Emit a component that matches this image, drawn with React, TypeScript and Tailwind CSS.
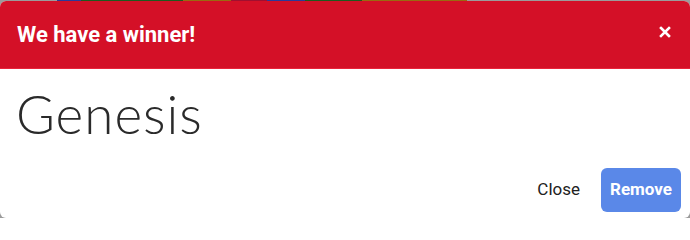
const WinnerModal = () => {
  return (
    <div className="flex flex-col w-[690px] h-[217px] bg-white rounded-[6px] overflow-hidden">
      {/* Header */}
      <div className="flex items-center justify-between h-[68px] pl-[17px] pr-[19px] bg-[#d41027] border-b border-[#e8243a]">
        <h2 className="text-[22px] font-bold text-white font-['Roboto',sans-serif] pb-[1px]">
          We have a winner!
        </h2>
        <button type="button" className="text-white pb-[5px]">
          <svg width="12" height="12" viewBox="0 0 12 12">
            <path d="M2 2 L10 10 M10 2 L2 10" stroke="white" strokeWidth="2.6" strokeLinecap="square" />
          </svg>
        </button>
      </div>

      {/* Body */}
      <div className="px-[16px] pt-[13px] flex-1">
        <p className="text-[53px] leading-[64px] tracking-[1px] font-light text-[#2a2a2a] font-['Lato',sans-serif]">
          Genesis
        </p>
      </div>

      {/* Footer */}
      <div className="flex items-center justify-end gap-[21px] pr-[9px] pb-[6px] font-['Roboto',sans-serif]">
        <button type="button" className="text-[17px] text-[#212121] font-normal">
          Close
        </button>
        <button
          type="button"
          className="w-[80px] h-[44px] rounded-[6px] bg-[#5a88e8] text-white text-[17px] font-bold"
        >
          Remove
        </button>
      </div>
    </div>
  );
};

const App = () => {
  return (
    <div className="w-[690px] h-[218px] bg-[#9b9b9b] overflow-hidden">
      <div className="flex h-[1px]">
        <div className="w-[57px] bg-[#9b9b9b]" />
        <div className="w-[24px] bg-[#2a3a9a]" />
        <div className="w-[102px] bg-[#1e5a1e]" />
        <div className="w-[48px] bg-[#9a6a10]" />
        <div className="w-[36px] bg-[#a01030]" />
        <div className="w-[38px] bg-[#2a3a9a]" />
        <div className="w-[57px] bg-[#1e5a1e]" />
        <div className="w-[105px] bg-[#9a6a10]" />
        <div className="flex-1 bg-[#9b9b9b]" />
      </div>
      <WinnerModal />
    </div>
  );
};

export default App;
